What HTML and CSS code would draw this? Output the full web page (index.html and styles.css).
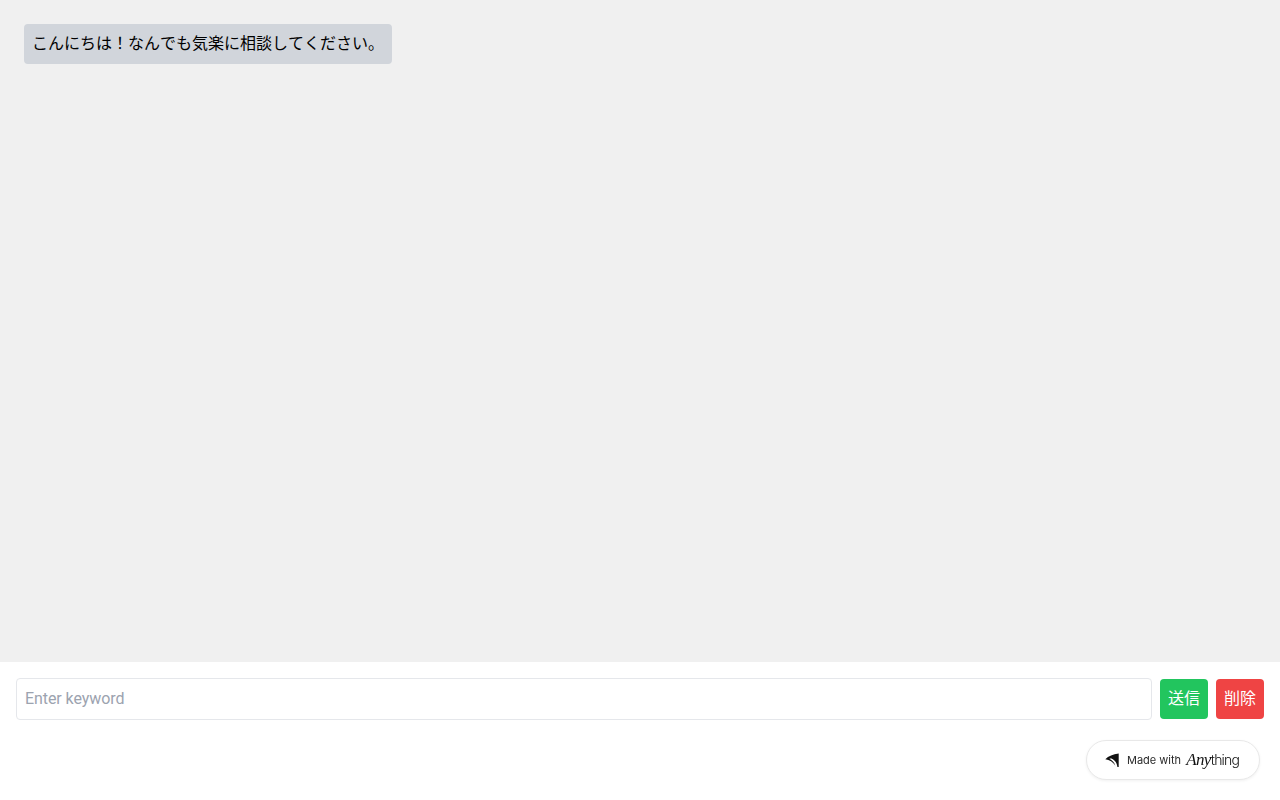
FILE: index.html
```html
<!DOCTYPE html>
<html lang="ja">
<head>
    <meta charset="UTF-8">
    <meta name="viewport" content="width=device-width, initial-scale=1.0">
    <title>Chat</title>
    <link rel="stylesheet" href="styles.css">
</head>
<body>
    <div class="page">
        <div class="messages">
            <p class="message">こんにちは！なんでも気楽に相談してください。</p>
        </div>

        <div class="input-bar">
            <input class="keyword-input" type="text" placeholder="Enter keyword">
            <button class="send-button">送信</button>
            <button class="delete-button">削除</button>
        </div>
    </div>

    <a class="made-with" href="#">
        <svg class="made-icon" width="14" height="14" viewBox="0 0 14 14">
            <path d="M0.3 6.2 C3.5 3 8 0.9 13.7 0.4 L13.7 14 L12.4 14 C12.2 10.8 10.6 7.2 6.4 5.4 C5.6 5.4 5 5.5 4.4 5.7 C7 6.9 9.4 9.4 10.2 12.4 C8.2 9.2 4.6 6.6 0.3 6.2 Z" fill="#111"/>
        </svg>
        <span class="made-text">Made with</span>
        <span class="brand"><span class="brand-any">Any</span>thing</span>
    </a>
</body>
</html>
```

FILE: styles.css
```css
*{
    box-sizing: border-box;
}
body{
    margin: 0;
    background-color: white;
    font-family: Roboto, "Noto Sans CJK JP", sans-serif;
    font-kerning: none;
}
.page{
    display: flex;
    flex-direction: column;
    height: 100vh;
}
.messages{
    flex: 1;
    background-color: #f0f0f0;
    padding: 24px;
}
.message{
    width: fit-content;
    margin: 0;
    padding: 8px;
    height: 40px;
    font-size: 16px;
    line-height: 24px;
    color: black;
    background-color: #d1d5db;
    border-radius: 4px;
}
.input-bar{
    display: flex;
    align-items: center;
    gap: 8px;
    height: 138px;
    padding: 16px 16px 80px;
    background-color: white;
}
.keyword-input{
    flex: 1;
    height: 42px;
    padding: 7px 8px 9px;
    font-family: inherit;
    font-size: 16px;
    letter-spacing: -0.08px;
    background-color: white;
    border: 1px solid #e5e7eb;
    border-radius: 4px;
    outline: none;
}
.keyword-input::placeholder{
    color: #9ca3af;
}
.send-button,
.delete-button{
    width: 48px;
    height: 40px;
    padding: 8px;
    font-family: inherit;
    font-size: 16px;
    line-height: 24px;
    color: white;
    border: none;
    border-radius: 4px;
    cursor: pointer;
}
.send-button{
    background-color: #22c55e;
}
.delete-button{
    background-color: #ef4444;
}
.made-with{
    position: fixed;
    right: 20px;
    bottom: 20px;
    display: flex;
    align-items: center;
    width: 174px;
    height: 40px;
    padding-left: 18px;
    color: #2a2a2a;
    text-decoration: none;
    background-color: white;
    border: 1px solid #e8e8e8;
    border-radius: 20px;
    box-shadow: 0 1px 3px rgba(0, 0, 0, 0.06);
}
.made-icon{
    flex-shrink: 0;
}
.made-text{
    margin-left: 8px;
    font-family: Inter, sans-serif;
    font-size: 11px;
}
.brand{
    margin-left: 5px;
    font-family: Inter, sans-serif;
    font-size: 14px;
    font-weight: 300;
    letter-spacing: -0.8px;
    color: #111;
}
.brand-any{
    font-family: "Liberation Serif", serif;
    font-style: italic;
    font-size: 17px;
    letter-spacing: -0.6px;
}
```
